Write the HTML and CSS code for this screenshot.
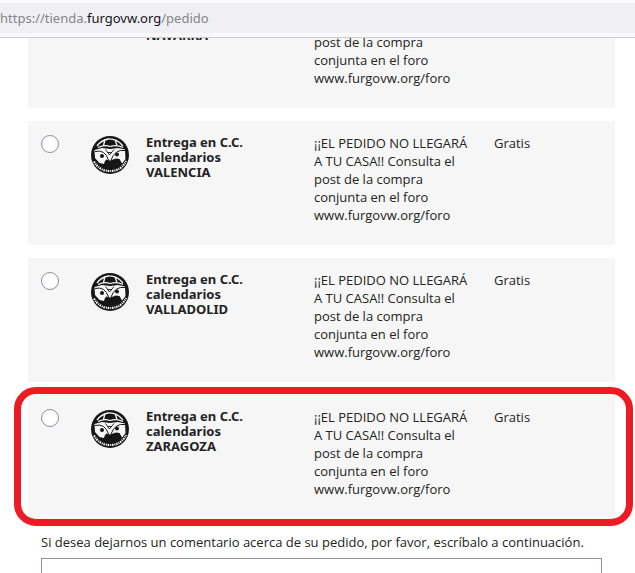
FILE: index.html
```
<!DOCTYPE html>
<html lang="es">
<head>
    <meta charset="UTF-8">
    <meta name="viewport" content="width=device-width, initial-scale=1.0">
    <title>Pedido</title>
    <link rel="stylesheet" href="styles.css">
</head>
<body>
    <svg class="sprite" aria-hidden="true">
        <symbol id="logo" viewBox="0 0 38 38">
            <circle cx="19" cy="19" r="19" fill="#161616"/>
            <!-- roof windows -->
            <path d="M6 10Q10 4.500 17 3Q26 2.500 32 10M14 3.500L12.500 9.500M24 3.500L26 9.500M7 11.500Q13 8.500 19 10.500Q26 8.500 32 11.500" fill="none" stroke="#f6f6f6" stroke-width="1.300"/>
            <!-- van front -->
            <path d="M3.500 14L11 12L19 13L27 12L34 13.500L34.500 23L31 27.500L28.500 23L25 22.500L19 24.500L15 23.500L13 28L8.500 27L4 22Z" fill="#f6f6f6"/>
            <path d="M4 15.500Q14 13 17.500 24M34 14.500Q24 13 20 24" fill="none" stroke="#161616" stroke-width="1"/>
            <path d="M14.500 13.500L18.500 19L23 13.500M16.500 16.500H21" fill="none" stroke="#161616" stroke-width=".9"/>
            <circle cx="11" cy="20" r="2" fill="#161616"/>
            <circle cx="26" cy="18.500" r="2" fill="#161616"/>
            <path d="M13.500 25.500L19 26.500L28.500 23.500L29 30Q20 34 14 30Z" fill="#161616"/>
            <!-- lettering band -->
            <path d="M3 25.500Q8 34.500 18 35Q30 35.500 35 25" fill="none" stroke="#f6f6f6" stroke-width="2.200" stroke-dasharray="1.600 .9 1 .8"/>
        </symbol>
    </svg>

    <header class="browser-bar">
        <div class="url">https://tienda.<span class="domain">furgovw.org</span>/pedido</div>
    </header>

    <main class="checkout">
        <form>
            <div class="delivery-options">
                <label class="option">
                    <input type="radio" name="delivery" value="navarra">
                    <svg class="logo" aria-hidden="true"><use href="#logo"/></svg>
                    <span class="carrier">Entrega en C.C. calendarios NAVARRA</span>
                    <span class="delay">¡¡EL PEDIDO NO LLEGARÁ A TU CASA!! Consulta el post de la compra conjunta en el foro www.furgovw.org/foro</span>
                    <span class="price">Gratis</span>
                </label>
                <label class="option">
                    <input type="radio" name="delivery" value="valencia">
                    <svg class="logo" aria-hidden="true"><use href="#logo"/></svg>
                    <span class="carrier">Entrega en C.C. calendarios VALENCIA</span>
                    <span class="delay">¡¡EL PEDIDO NO LLEGARÁ A TU CASA!! Consulta el post de la compra conjunta en el foro www.furgovw.org/foro</span>
                    <span class="price">Gratis</span>
                </label>
                <label class="option">
                    <input type="radio" name="delivery" value="valladolid">
                    <svg class="logo" aria-hidden="true"><use href="#logo"/></svg>
                    <span class="carrier">Entrega en C.C. calendarios VALLADOLID</span>
                    <span class="delay">¡¡EL PEDIDO NO LLEGARÁ A TU CASA!! Consulta el post de la compra conjunta en el foro www.furgovw.org/foro</span>
                    <span class="price">Gratis</span>
                </label>
                <label class="option highlighted">
                    <input type="radio" name="delivery" value="zaragoza">
                    <svg class="logo" aria-hidden="true"><use href="#logo"/></svg>
                    <span class="carrier">Entrega en C.C. calendarios ZARAGOZA</span>
                    <span class="delay">¡¡EL PEDIDO NO LLEGARÁ A TU CASA!! Consulta el post de la compra conjunta en el foro www.furgovw.org/foro</span>
                    <span class="price">Gratis</span>
                </label>
            </div>
            <div class="comment">
                <label for="delivery_message">Si desea dejarnos un comentario acerca de su pedido, por favor, escríbalo a continuación.</label>
                <textarea id="delivery_message" name="delivery_message" rows="3"></textarea>
            </div>
        </form>
    </main>
</body>
</html>
```
FILE: styles.css
```
* {
    box-sizing: border-box;
}
body {
    display: flex;
    flex-direction: column;
    height: 100vh;
    margin: 0;
    overflow: hidden;
    background: #fff;
    color: #232323;
    font-family: "Open Sans", "Noto Sans", sans-serif;
    font-size: 13px;
    line-height: 18px;
}
.sprite {
    display: none;
}
.browser-bar {
    flex: none;
    padding: 3px 0 4px;
    background: #f9f9fb;
    border-bottom: 1px solid #ccc;
}
.url {
    padding: 6px 0;
    background: #f0f0f4;
    color: #85858a;
    font-family: "Noto Sans", sans-serif;
}
.domain {
    color: #15141a;
}
.checkout {
    flex: 1;
    min-height: 0;
    padding: 0 20px 0 28px;
    overflow: hidden;
}
/* the list is scrolled, so its first row is partly under the bar */
.delivery-options {
    display: flex;
    flex-direction: column;
    gap: 13px;
    margin-top: -54px;
}
.option {
    display: grid;
    grid-template-columns: 50px 55px 14fr 15fr 9fr;
    align-items: start;
    position: relative;
    padding: 13px 13px 21px;
    background: #f6f6f6;
}
.option input {
    appearance: none;
    width: 18px;
    height: 18px;
    margin: 1px 0 0;
    border: 1px solid #8f8f9d;
    border-radius: 50%;
    background: #fff;
}
.option input:checked {
    border: 5px solid #0060df;
}
.logo {
    width: 38px;
    height: 38px;
    margin-top: 2px;
}
.carrier {
    padding-right: 40px;
    margin-top: 1px;
    font-family: "Noto Sans", sans-serif;
    font-weight: bold;
    line-height: 15px;
}
.delay {
    padding-right: 24px;
}
.highlighted::after {
    content: "";
    position: absolute;
    inset: -8px -18px -7px -14px;
    border: 7px solid #ed1c24;
    border-radius: 22px;
    pointer-events: none;
}
.comment {
    padding: 14px 13px 0;
}
.comment label {
    display: block;
    margin-bottom: 7px;
}
.comment textarea {
    display: block;
    width: 100%;
    border: 1px solid #8f8f9d;
    background: #fff;
    font: inherit;
    resize: none;
}
```
